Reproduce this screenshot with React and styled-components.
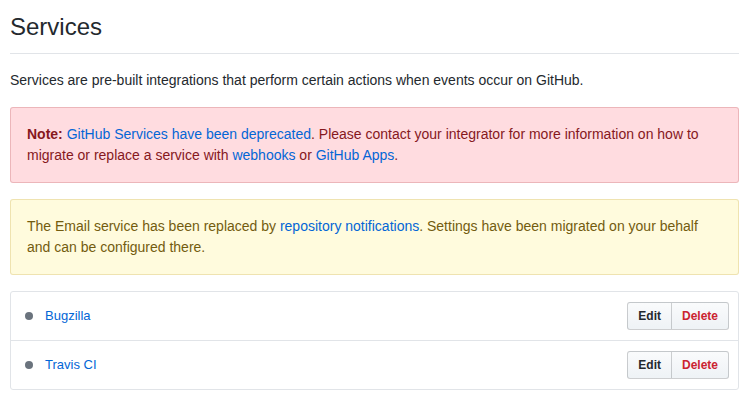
import React from "react";
import styled, { createGlobalStyle } from "styled-components";

const GlobalStyle = createGlobalStyle`
  body {
    margin: 0;
    background: #fff;
    font-family: "Liberation Sans", Arial, sans-serif;
    font-size: 14px;
    line-height: 1.5;
    color: #24292e;
  }
`;

const Page = styled.div`
  padding: 9px 9px 0 10px;
`;

const Subhead = styled.div`
  padding-bottom: 8px;
  margin-bottom: 16px;
  border-bottom: 1px solid #e1e4e8;
`;

const Heading = styled.h2`
  margin: 0;
  font-size: 24px;
  font-weight: normal;
  line-height: 36px;
`;

const Lead = styled.p`
  margin: 0 0 16px;
`;

const Link = styled.a`
  color: #0366d6;
  text-decoration: none;
`;

const Flash = styled.div`
  padding: 16px;
  margin-bottom: 16px;
  border: 1px solid ${(p) => (p.$kind === "error" ? "rgba(158, 28, 35, 0.2)" : "rgba(176, 136, 0, 0.2)")};
  border-radius: 3px;
  background: ${(p) => (p.$kind === "error" ? "#ffdce0" : "#fffbdd")};
  color: ${(p) => (p.$kind === "error" ? "#86181d" : "#735c0f")};
`;

const Box = styled.ul`
  margin: 0;
  padding: 0;
  list-style: none;
  border: 1px solid #e1e4e8;
  border-radius: 3px;
`;

const Row = styled.li`
  display: flex;
  align-items: center;
  padding: 10px 9px 10px 14px;
  & + & {
    border-top: 1px solid #e1e4e8;
  }
`;

const Dot = styled.span`
  width: 8px;
  height: 8px;
  border-radius: 50%;
  background: #6a737d;
  margin-right: 12px;
  flex: none;
`;

const Name = styled(Link)`
  font-size: 13px;
  flex: 1;
`;

const BtnGroup = styled.div`
  display: flex;
`;

const Btn = styled.button`
  font-family: inherit;
  font-size: 12px;
  font-weight: bold;
  line-height: 20px;
  padding: 3px 10px;
  color: ${(p) => (p.$danger ? "#cb2431" : "#24292e")};
  background: linear-gradient(-180deg, #fafbfc 0%, #eff3f6 90%);
  border: 1px solid rgba(27, 31, 35, 0.2);
  border-radius: ${(p) => (p.$danger ? "0 3px 3px 0" : "3px 0 0 3px")};
  margin-left: ${(p) => (p.$danger ? "-1px" : "0")};
  cursor: pointer;
`;

const services = ["Bugzilla", "Travis CI"];

export default function App() {
  return (
    <Page>
      <GlobalStyle />
      <Subhead>
        <Heading>Services</Heading>
      </Subhead>
      <Lead>
        Services are pre-built integrations that perform certain actions when events occur on GitHub.
      </Lead>
      <Flash $kind="error">
        <strong>Note:</strong> <Link href="#">GitHub Services have been deprecated</Link>. Please
        contact your integrator for more information on how to migrate or replace a service with{" "}
        <Link href="#">webhooks</Link> or <Link href="#">GitHub Apps</Link>.
      </Flash>
      <Flash $kind="warn">
        The Email service has been replaced by <Link href="#">repository notifications</Link>.
        Settings have been migrated on your behalf and can be configured there.
      </Flash>
      <Box>
        {services.map((s) => (
          <Row key={s}>
            <Dot />
            <Name href="#">{s}</Name>
            <BtnGroup>
              <Btn>Edit</Btn>
              <Btn $danger>Delete</Btn>
            </BtnGroup>
          </Row>
        ))}
      </Box>
    </Page>
  );
}
